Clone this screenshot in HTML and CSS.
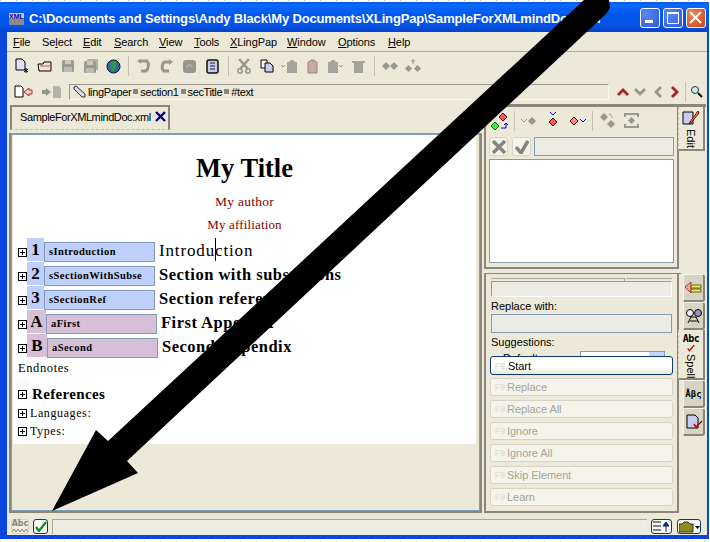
FILE: index.html
```html
<!DOCTYPE html>
<html lang="en">
<head>
<meta charset="utf-8">
<title>XLingPap</title>
<link rel="stylesheet" href="styles.css">
</head>
<body>
<svg class="defs" width="0" height="0">
  <defs>
    <symbol id="dia" viewBox="0 0 8 8"><path d="M4 0 8 4 4 8 0 4Z"/></symbol>
  </defs>
</svg>
<div class="window">
  <header class="titlebar">
    <span class="appicon"><span>XML</span></span>
    <span class="titletext">C:\Documents and Settings\Andy Black\My Documents\XLingPap\SampleForXMLmindDoc.xml</span>
    <span class="winbtns">
      <span class="winbtn"><svg width="20" height="20" viewBox="0 0 20 20"><rect x="5" y="12" width="8" height="3" fill="#fff"/></svg></span>
      <span class="winbtn"><svg width="20" height="20" viewBox="0 0 20 20"><path d="M4.500 4.500h11v11h-11z" fill="none" stroke="#fff" stroke-width="1"/><rect x="4" y="4" width="12" height="2" fill="#fff"/></svg></span>
      <span class="winbtn close"><svg width="20" height="20" viewBox="0 0 20 20"><path d="M4 4 15 15M15 4 4 15" stroke="#fff" stroke-width="2"/></svg></span>
    </span>
  </header>

  <nav class="menubar">
    <span class="m m1"><u>F</u>ile</span>
    <span class="m m2">Se<u>l</u>ect</span>
    <span class="m m3"><u>E</u>dit</span>
    <span class="m m4"><u>S</u>earch</span>
    <span class="m m5"><u>V</u>iew</span>
    <span class="m m6"><u>T</u>ools</span>
    <span class="m m7"><u>X</u>LingPap</span>
    <span class="m m8"><u>W</u>indow</span>
    <span class="m m9"><u>O</u>ptions</span>
    <span class="m"><u>H</u>elp</span>
  </nav>

  <div class="toolbar">
    <div class="tools">
      <span class="tool"><svg width="16" height="16" viewBox="0 0 16 16"><path d="M2 1h6l3 3v8H2z" fill="#dfe0f5" stroke="#000"/><path d="M12 10v5M10 11l4 3M14 11l-4 3" stroke="#000"/></svg></span>
      <span class="tool"><svg width="16" height="16" viewBox="0 0 16 16"><path d="M1 6h5l1-2h7v9H2z" fill="#f3e2cf" stroke="#000"/><path d="M3 8h10" stroke="#b55"/></svg></span>
      <span class="tool"><svg width="14" height="14" viewBox="0 0 14 14"><rect x="1" y="1" width="12" height="12" rx="1.500" fill="#9a9a94"/><rect x="4" y="1" width="6" height="4" fill="#c9c8bd"/><rect x="3" y="8" width="8" height="5" fill="#bdbcb2"/></svg></span>
      <span class="tool"><svg width="16" height="16" viewBox="0 0 16 16"><rect x="4" y="1" width="11" height="11" rx="1" fill="#b0afa6"/><rect x="1" y="3" width="12" height="12" rx="1.500" fill="#9a9a94"/><rect x="4" y="3" width="6" height="4" fill="#c9c8bd"/><rect x="3" y="10" width="8" height="5" fill="#bdbcb2"/></svg></span>
      <span class="tool"><svg width="15" height="15" viewBox="0 0 15 15"><circle cx="7.500" cy="7.500" r="6.500" fill="#2f6f9f" stroke="#111"/><path d="M6 2c3 0 5 2 4 5s-2 5-3 5-1-3-2-4 0-4 1-6z" fill="#2e9a4a"/></svg></span>
    </div>
    <span class="sep"></span>
    <div class="tools">
      <span class="tool"><svg width="15" height="15" viewBox="0 0 15 15"><path d="M3 2l8 0c2 2 2 8-1 10H5" fill="none" stroke="#98978d" stroke-width="3"/><path d="M1 2l4-2v5z" fill="#98978d"/></svg></span>
      <span class="tool"><svg width="15" height="15" viewBox="0 0 15 15"><path d="M12 3H6C3 4 2 10 5 12h5" fill="none" stroke="#98978d" stroke-width="3"/><path d="M14 3l-4-3v6z" fill="#98978d"/></svg></span>
      <span class="tool"><svg width="15" height="15" viewBox="0 0 15 15"><rect x="1" y="1" width="13" height="13" rx="3" fill="#98978d"/><path d="M5 9c-1-4 5-4 5-1" fill="none" stroke="#c9c8bd"/></svg></span>
      <span class="tool"><svg width="15" height="15" viewBox="0 0 15 15"><rect x="2" y="1" width="11" height="13" rx="2" fill="#c7c9e8" stroke="#111" stroke-width="1.500"/><path d="M5 4h5M5 7h5M5 10h5" stroke="#223"/></svg></span>
    </div>
    <span class="sep sep2"></span>
    <div class="tools">
      <span class="tool"><svg width="14" height="15" viewBox="0 0 14 15"><path d="M2 0l9 10M12 0 3 10" stroke="#98978d" stroke-width="2.500"/><circle cx="3" cy="12" r="2.200" fill="none" stroke="#98978d" stroke-width="1.500"/><circle cx="11" cy="12" r="2.200" fill="none" stroke="#98978d" stroke-width="1.500"/></svg></span>
      <span class="tool"><svg width="14" height="14" viewBox="0 0 14 14"><path d="M1 1h6v8H1z" fill="#fff" stroke="#000"/><path d="M5 4h5l3 3v6H5z" fill="#c9cbee" stroke="#000"/></svg></span>
      <span class="tool"><svg width="17" height="14" viewBox="0 0 17 14"><path d="M0 6l2 2 2-2" fill="none" stroke="#98978d"/><path d="M8 3l2-2h2l2 2h2v11H6V3z" fill="#a5a49a"/></svg></span>
      <span class="tool"><svg width="11" height="15" viewBox="0 0 11 15"><path d="M2 3l2-2h3l2 2h1v11H1V3z" fill="#c9a9a0" stroke="#888"/></svg></span>
      <span class="tool"><svg width="17" height="14" viewBox="0 0 17 14"><path d="M3 3l2-2h2l2 2h2v11H1V3z" fill="#a5a49a"/><path d="M12 6l2 2 2-2" fill="none" stroke="#98978d"/></svg></span>
      <span class="tool"><svg width="13" height="14" viewBox="0 0 13 14"><path d="M0 2h13v2H0zM2 4h9v10H2z" fill="#a5a49a"/></svg></span>
    </div>
    <span class="sep sep3"></span>
    <div class="tools">
      <span class="tool grey"><svg width="16" height="12" viewBox="0 0 16 12"><use href="#dia" x="0" y="2" width="8" height="8"/><use href="#dia" x="8" y="2" width="8" height="8"/></svg></span>
      <span class="tool grey"><svg width="16" height="15" viewBox="0 0 16 15"><use href="#dia" x="0" y="6" width="7" height="7"/><use href="#dia" x="9" y="6" width="7" height="7"/><path d="M8 0v5M6 2h4" stroke="#98978d"/></svg></span>
    </div>
  </div>

  <div class="navbar">
    <span class="navicon"><svg width="19" height="14" viewBox="0 0 19 14"><path d="M1 1h6l2 2v9H1z" fill="#fff" stroke="#000"/><path d="M10 7l5-4v2h3v4h-3v2z" fill="#f4c9c0" stroke="#a33"/></svg></span>
    <span class="navicon navicon2"><svg width="21" height="14" viewBox="0 0 21 14"><path d="M1 5h4V3l5 4-5 4V9H1z" fill="#98978d"/><path d="M12 1h6l2 2v10h-8z" fill="#b4b3a9"/></svg></span>
    <div class="path">
      <svg width="13" height="13" viewBox="0 0 13 13"><path d="M1 2l2-1 9 8v3H9L1 4z" fill="#d6d8ee" stroke="#333"/></svg>
      <span class="pathtext">lingPaper</span><i></i><span class="pathtext">section1</span><i></i><span class="pathtext">secTitle</span><i></i><span class="pathtext">#text</span>
    </div>
    <span class="chev"><svg width="12" height="10" viewBox="0 0 12 10"><path d="M0 7 6 1l6 6-2 2-4-4-4 4z" fill="#b02020"/></svg></span>
    <span class="chev"><svg width="12" height="10" viewBox="0 0 12 10"><path d="M0 3l6 6 6-6-2-2-4 4-4-4z" fill="#98978d"/></svg></span>
    <span class="chev"><svg width="10" height="12" viewBox="0 0 10 12"><path d="M7 0 1 6l6 6 2-2-4-4 4-4z" fill="#98978d"/></svg></span>
    <span class="chev"><svg width="10" height="12" viewBox="0 0 10 12"><path d="M3 0l6 6-6 6-2-2 4-4-4-4z" fill="#b02020"/></svg></span>
    <span class="sep navsep"></span>
    <span class="chev"><svg width="13" height="13" viewBox="0 0 13 13"><circle cx="5" cy="5" r="3.500" fill="#cfe6f5" stroke="#333"/><path d="M8 8l4 4" stroke="#000" stroke-width="2"/></svg></span>
  </div>

  <main class="workspace">
    <section class="editor">
      <div class="tabstrip">
        <div class="doctab">
          <span class="tabname">SampleForXMLmindDoc.xml</span>
          <svg class="tabx" width="11" height="11" viewBox="0 0 11 11"><path d="M1 1l9 9M10 1l-9 9" stroke="#00008b" stroke-width="2.400"/></svg>
        </div>
      </div>
      <div class="docframe">
        <article class="doc">
          <h1 class="doctitle">My Title</h1>
          <p class="byline">My author</p>
          <p class="byline aff">My affiliation</p>

          <div class="row"><span class="plus"></span><span class="num">1</span><span class="idbox">sIntroduction</span><span class="head h-reg">Introdu<span class="caret"></span>ction</span></div>
          <div class="row"><span class="plus"></span><span class="num">2</span><span class="idbox">sSectionWithSubse</span><span class="head">Section with subsections</span></div>
          <div class="row"><span class="plus"></span><span class="num">3</span><span class="idbox">sSectionRef</span><span class="head">Section references</span></div>
          <div class="row app"><span class="plus"></span><span class="num">A</span><span class="idbox">aFirst</span><span class="head">First Appendix</span></div>
          <div class="row app b"><span class="plus"></span><span class="num">B</span><span class="idbox">aSecond</span><span class="head">Second Appendix</span></div>

          <p class="endnotes">Endnotes</p>
          <div class="refs"><span class="plus"></span><strong>References</strong></div>
          <div class="lst"><span class="plus"></span><span>Languages:</span></div>
          <div class="lst"><span class="plus"></span><span>Types:</span></div>
        </article>
      </div>
    </section>

    <aside class="side">
      <div class="pane upper">
        <div class="panebody">
          <div class="etools">
            <span class="etool e1"><svg width="20" height="20" viewBox="0 0 20 20"><path d="M13 1l4 4-4 4-4-4z" fill="#f55" stroke="#600"/><path d="M5 10l4 4-4 4-4-4z" fill="#4e4" stroke="#060"/><path d="M11 16h5v-4M14 13l2-2 2 2" fill="none" stroke="#00c"/></svg></span>
            <span class="sep esep esep1"></span>
            <span class="etool"><svg width="16" height="10" viewBox="0 0 16 10"><path d="M0 3l3 3 3-3" fill="none" stroke="#98978d"/><path d="M11 1l4 4-4 4-4-4z" fill="#98978d"/></svg></span>
            <span class="etool"><svg width="10" height="17" viewBox="0 0 10 17"><path d="M2 0l3 3 3-3" fill="none" stroke="#00c"/><path d="M5 6l4 4-4 4-4-4z" fill="#f55" stroke="#600"/></svg></span>
            <span class="etool"><svg width="17" height="10" viewBox="0 0 17 10"><path d="M5 1l4 4-4 4-4-4z" fill="#f88" stroke="#600"/><path d="M11 3l3 3 3-3" fill="none" stroke="#00c"/></svg></span>
            <span class="sep esep"></span>
            <span class="etool"><svg width="15" height="16" viewBox="0 0 15 16"><path d="M4 0l4 4-4 4-4-4zM11 7l4 4-4 4-4-4z" fill="#98978d"/><path d="M9 1c2 0 3 2 3 4" fill="none" stroke="#98978d"/></svg></span>
            <span class="etool"><svg width="15" height="15" viewBox="0 0 15 15"><path d="M1 4V1h13v3M1 11v3h13v-3" fill="none" stroke="#98978d" stroke-width="2"/><path d="M7.500 4l3.500 3.500L7.500 11 4 7.500z" fill="#98978d"/></svg></span>
          </div>
          <div class="cmdrow">
            <span class="cmdbtn"><svg width="14" height="14" viewBox="0 0 14 14"><path d="M1 1l12 12M13 1 1 13" stroke="#85857c" stroke-width="3.500"/></svg></span>
            <span class="cmdbtn"><svg width="14" height="14" viewBox="0 0 14 14"><path d="M1 7l5 6L13 1" fill="none" stroke="#85857c" stroke-width="3.500"/></svg></span>
            <span class="cmdfield"></span>
          </div>
          <div class="whitebox"></div>
        </div>
        <div class="vtabs">
          <div class="vtab on edit">
            <svg width="18" height="16" viewBox="0 0 18 16"><path d="M1 2h10v12H1z" fill="#c9cbee" stroke="#000"/><path d="M16 1 8 12l-1 2 2-1 8-10z" fill="#e2a020" stroke="#800"/></svg>
            <span class="vlabel">Edit</span>
          </div>
        </div>
      </div>
      <div class="splitter"></div>
      <div class="pane lower">
        <div class="panebody lowerbody">
          <div class="hairline"><span></span><span class="hs"></span></div>
          <div class="infield"></div>
          <div class="lbl l1">Replace with:</div>
          <div class="repfield"></div>
          <div class="lbl l2">Suggestions:</div>
          <div class="clipped"><span class="cliptext">Default</span><span class="combo"><span></span></span></div>
          <button class="act start" type="button"><em>F9</em>Start</button>
          <button class="act" type="button"><em>F9</em>Replace</button>
          <button class="act" type="button"><em>F9</em>Replace All</button>
          <button class="act" type="button"><em>F9</em>Ignore</button>
          <button class="act" type="button"><em>F9</em>Ignore All</button>
          <button class="act" type="button"><em>F9</em>Skip Element</button>
          <button class="act" type="button"><em>F9</em>Learn</button>
        </div>
        <div class="vtabs low">
          <div class="vtab off"><svg width="18" height="14" viewBox="0 0 18 14"><path d="M0 6l6-5v11z" fill="#f6a6a0" stroke="#a33"/><path d="M6 4h10v3H6zM6 8h10v3H6z" fill="#ede86a" stroke="#660"/></svg></div>
          <div class="vtab off"><svg width="16" height="16" viewBox="0 0 16 16"><circle cx="4" cy="5" r="3.500" fill="#eee" stroke="#000"/><circle cx="12" cy="5" r="3.500" fill="#99b" stroke="#000"/><path d="M2 15l3-6h5l3 6M4 13h8" fill="none" stroke="#000"/></svg></div>
          <div class="vtab on spell">
            <span class="abc">Abc</span>
            <svg width="10" height="8" viewBox="0 0 10 8"><path d="M1 4l2 3 6-7" fill="none" stroke="#c00000" stroke-width="1.500"/></svg>
            <span class="vlabel">Spell</span>
          </div>
          <div class="vtab off"><span class="abc greek">Âβς</span></div>
          <div class="vtab off"><svg width="18" height="15" viewBox="0 0 18 15"><path d="M2 1h8l3 3v10H2z" fill="#c9cbee" stroke="#000"/><path d="M9 10l2 3 6-6" fill="none" stroke="#c00000" stroke-width="1.500"/></svg></div>
        </div>
      </div>
    </aside>
  </main>

  <footer class="statusbar">
    <span class="sbtn flat"><span class="sabc">Abc</span><svg width="16" height="5" viewBox="0 0 16 5"><path d="M0 4l2-3 2 3 2-3 2 3 2-3 2 3 2-3 2 3" fill="none" stroke="#86857c"/></svg></span>
    <span class="sbtn check"><svg width="12" height="11" viewBox="0 0 12 11"><path d="M1 6l3 4 7-9" fill="none" stroke="#0a8a1a" stroke-width="2.200"/></svg></span>
    <span class="sfield"></span>
    <span class="sbtn r1"><svg width="17" height="11" viewBox="0 0 17 11"><path d="M0 1h8M0 5h8M0 9h8" stroke="#111"/><path d="M13 11V2M10 5l3-4 3 4z" stroke="#003070" fill="#003070"/></svg></span>
    <span class="sbtn r2"><svg width="21" height="12" viewBox="0 0 21 12"><path d="M0 3h3l2-2h4l2 2h3v8H0z" fill="#8f8a20" stroke="#332"/><path d="M16 5h5l-2.500 3z" fill="#000"/></svg></span>
  </footer>
</div>

<svg class="bigarrow" width="710" height="542" viewBox="0 0 710 542" aria-hidden="true">
  <path d="M52 511 96 430 108 441 584 0H609L610 8 606 14 127 461 138 473Z"/>
</svg>
</body>
</html>
```

FILE: styles.css
```css
* { box-sizing: border-box; }
html, body { margin: 0; padding: 0; }
body {
  position: relative;
  width: 710px;
  height: 542px;
  overflow: hidden;
  background:
    repeating-linear-gradient(90deg, #c8c8c8 0 1px, transparent 1px 16px) 0 0 / 100% 1px no-repeat,
    repeating-linear-gradient(90deg, #c8c8c8 0 1px, transparent 1px 16px) 0 100% / 100% 1px no-repeat,
    #fff;
  font-family: "Liberation Sans", Arial, sans-serif;
  font-size: 11px;
  color: #000;
}
.defs { position: absolute; }
#dia, .grey { fill: #98978d; }

.window {
  margin-top: 2px;
  width: 709px;
  height: 537px;
  display: flex;
  flex-direction: column;
  background: #ece9d8;
  border-left: 7px solid #0a45dd;
  border-right: 2px solid #0a45dd;
  border-bottom: 4px solid #0a45dd;
}

.titlebar {
  height: 30px;
  margin-left: -7px;
  margin-right: -2px;
  padding: 0 3px 0 9px;
  flex: none;
  display: flex;
  align-items: center;
  background: linear-gradient(#0a5ae8 0, #0a6afa 3px, #0058ee 12px, #0553e6 24px, #0342c8 30px);
  color: #fff;
}
.appicon {
  width: 15px;
  height: 12px;
  flex: none;
  margin: 3px 5px 0 0;
  background: linear-gradient(#c8cbe8 50%, #8a8a8a 50%);
  font: bold 7px/7px "Liberation Sans", sans-serif;
  color: #00008b;
  text-align: center;
  overflow: hidden;
}
.titletext {
  flex: 1;
  min-width: 0;
  margin-top: 3px;
  white-space: nowrap;
  font: bold 13px/18px "Liberation Sans", sans-serif;
  letter-spacing: -.15px;
}
.winbtns { display: flex; gap: 3px; flex: none; margin-top: 2px; }
.winbtn {
  width: 20px;
  height: 20px;
  border: 1px solid #fff;
  border-radius: 3px;
  background: radial-gradient(circle at 30% 30%, #5c8af0, #2a56d8);
  overflow: hidden;
}
.winbtn svg { display: block; margin: -1px; }
.winbtn.close { background: radial-gradient(circle at 30% 30%, #e88a66, #d04010); }

.menubar {
  height: 20px;
  flex: none;
  display: flex;
  align-items: center;
  padding-left: 6px;
  border-bottom: 1px solid #aca899;
  letter-spacing: -.1px;
}
.m { flex: none; }
.m1 { width: 29px; }
.m2 { width: 41px; }
.m3 { width: 31px; }
.m4 { width: 45px; }
.m5 { width: 35px; }
.m6 { width: 36px; }
.m7 { width: 57px; }
.m8 { width: 51px; }
.m9 { width: 50px; }

.toolbar {
  height: 28px;
  flex: none;
  display: flex;
  align-items: center;
  padding-left: 3px;
}
.tools { display: flex; }
.tool {
  width: 23px;
  height: 20px;
  display: flex;
  align-items: center;
  justify-content: center;
}
.sep {
  width: 1px;
  height: 20px;
  flex: none;
  background: #c4c1b0;
  margin: 0 3px;
}
.sep2, .sep3 { margin-left: 4px; }

.navbar {
  height: 23px;
  flex: none;
  display: flex;
  align-items: center;
  padding-left: 7px;
}
.navicon { width: 19px; height: 14px; display: flex; }
.navicon2 { margin-left: 8px; width: 21px; margin-right: 7px; }
.path {
  width: 540px;
  height: 16px;
  flex: none;
  display: flex;
  align-items: center;
  gap: 1px;
  padding-left: 3px;
  border-top: 1px solid #9a988a;
  border-left: 1px solid #9a988a;
  border-right: 1px solid #f8f7f0;
  border-bottom: 1px solid #f8f7f0;
  font-size: 11px;
  letter-spacing: -.35px;
  margin-right: 5px;
}
.path svg { margin-right: 1px; }
.path i { width: 5px; height: 5px; background: #85857c; margin: 0 1px; }
.chev { width: 17.500px; display: flex; justify-content: center; align-items: center; }
.navsep { margin: 0 2px 0 1px; }

.workspace {
  flex: 1;
  min-height: 0;
  display: flex;
  padding: 1px 0 0 2px;
}

.editor {
  width: 473px;
  flex: none;
  display: flex;
  flex-direction: column;
  padding-bottom: 3px;
}
.tabstrip { height: 29px; flex: none; padding-top: 1px; }
.doctab {
  width: 160px;
  height: 25px;
  margin-left: 1px;
  display: flex;
  align-items: center;
  padding: 0 0 3px 8px;
  border-top: 2px solid #8a877a;
  border-left: 2px solid #8a877a;
  border-right: 2px solid #8a877a;
  border-bottom: 1px dashed #c4c1b0;
}
.tabname { flex: none; width: 135px; font-size: 11px; letter-spacing: -.4px; white-space: nowrap; }
.tabx { flex: none; }
.docframe {
  flex: 1;
  min-height: 0;
  border: 2px solid #8a877a;
  border-top: 1px solid #7f9db9;
  box-shadow: inset 0 0 0 1px #7f9db9;
  padding: 1px 1px 1px 2px;
  background: #ece9d8;
}
.doc {
  height: 309px;
  margin-right: 3px;
  padding: 16px 5px 0;
  background: #fff;
  font-family: "Liberation Serif", "Times New Roman", serif;
}
.doctitle {
  margin: 0;
  font-size: 26.500px;
  line-height: 34px;
  text-align: center;
}
.byline {
  margin: 9px 0 0;
  font-size: 13.500px;
  line-height: 15px;
  text-align: center;
  color: #800000;
  letter-spacing: .25px;
}
.aff { margin-top: 8px; margin-bottom: 6px; font-size: 13px; letter-spacing: .15px; }

.row {
  height: 24px;
  display: flex;
  align-items: flex-start;
}
.plus {
  width: 9px;
  height: 9px;
  flex: none;
  border: 1px solid #000;
  background:
    linear-gradient(#000, #000) center / 5px 1px no-repeat,
    linear-gradient(#000, #000) center / 1px 5px no-repeat;
}
.row .plus { margin-top: 10px; }
.num {
  width: 17px;
  height: 23px;
  flex: none;
  background: #bfcffc;
  font-size: 17px;
  line-height: 23px;
  font-weight: 700;
  text-align: center;
}
.idbox {
  width: 111px;
  height: 20px;
  flex: none;
  margin-top: 4px;
  padding-left: 4px;
  border: 1px solid #7f9db9;
  background: #bfcffc;
  font-size: 10.500px;
  font-weight: 700;
  line-height: 18px;
  letter-spacing: .45px;
  white-space: nowrap;
  overflow: hidden;
}
.head {
  margin-left: 4px;
  font-size: 16.500px;
  line-height: 25px;
  font-weight: 700;
  letter-spacing: .5px;
  white-space: nowrap;
}
.h-reg { font-size: 17px; font-weight: 400; letter-spacing: .85px; }
.caret {
  display: inline-block;
  width: 1px;
  height: 23px;
  margin: 0 -1px 0 0;
  background: #000;
  vertical-align: top;
}
.app .num { width: 19px; background: #d8bfd8; }
.app .idbox { background: #d8bfd8; }
.app.b .num { width: 20px; }
.endnotes {
  margin: 1px 0 0;
  font-size: 12.500px;
  line-height: 18px;
  letter-spacing: .6px;
}
.refs {
  display: flex;
  align-items: center;
  margin-top: 8px;
  height: 19px;
  font-size: 15px;
  letter-spacing: .35px;
}
.refs strong { margin-left: 5px; }
.lst {
  display: flex;
  align-items: center;
  height: 18px;
  font-size: 12px;
  letter-spacing: .6px;
}
.lst span:last-child { margin-left: 3px; }

.side { width: 222px; flex: none; display: flex; flex-direction: column; margin-left: 2px; }
.pane { display: flex; }
.upper { height: 165px; flex: none; border-top: 3px solid #8a877a; }
.panebody {
  width: 195px;
  flex: none;
  border-left: 2px solid #8a877a;
  border-right: 2px solid #8a877a;
  border-bottom: 2px solid #8a877a;
}
.etools {
  height: 27px;
  display: flex;
  align-items: center;
}
.etool { width: 24px; display: flex; justify-content: center; }
.e1 { width: 28px; margin-top: 3px; }
.esep { margin: 0 2px 0 3px; }
.esep1 { margin-left: 0; }
.cmdrow {
  display: flex;
  gap: 4px;
  padding: 3px 3px 0 3px;
}
.cmdbtn {
  width: 19px;
  height: 19px;
  display: flex;
  align-items: center;
  justify-content: center;
  background: #f5f4ea;
  border: 1px solid #d6d3c2;
  border-radius: 3px;
}
.cmdfield {
  flex: 1;
  height: 19px;
  margin-left: -1px;
  background: #ecebe4;
  border: 1px solid #7f9db9;
}
.whitebox {
  height: 104px;
  margin: 3px 3px 0;
  background: #fff;
  border: 1px solid #7f9db9;
}
.vtabs { flex: 1; }
.vtab { display: flex; flex-direction: column; align-items: center; }
.vtab.on {
  width: 27px;
  background: #ece9d8;
  border-right: 2px solid #8a877a;
  border-bottom: 2px solid #8a877a;
  margin-left: -1px;
  padding-top: 3px;
}
.vlabel {
  writing-mode: vertical-rl;
  font-size: 11px;
  margin-top: 3px;
}
.edit { height: 44px; border-left: 1px dashed #c4c1b0; }
.splitter {
  height: 5px;
  flex: none;
  border-bottom: 1px solid #8a877a;
  width: 197px;
}
.lower { flex: 1; min-height: 0; }
.lowerbody {
  padding: 4px 5px 0;
  margin-bottom: 3px;
  overflow: hidden;
}
.hairline { display: flex; height: 3px; gap: 1px; }
.hairline span { flex: 1; border-top: 1px solid #aca899; border-right: 1px solid #aca899; }
.hairline .hs { flex: none; width: 46px; border-right: 0; }
.infield {
  height: 16px;
  background: #ecebe4;
  border-top: 1px solid #9a988a;
  border-left: 1px solid #9a988a;
  border-right: 1px solid #fff;
  border-bottom: 1px solid #fff;
}
.lbl { line-height: 15px; }
.l1 { margin-top: 2px; }
.repfield {
  height: 19px;
  background: #ecebe4;
  border: 1px solid #7f9db9;
}
.l2 { margin-top: 2px; margin-bottom: 1px; }
.clipped {
  height: 5px;
  display: flex;
  justify-content: space-between;
  overflow: hidden;
}
.cliptext { display: block; height: 5px; overflow: hidden; padding-left: 12px; line-height: 15px; }
.combo {
  width: 85px;
  height: 10px;
  margin-right: 7px;
  border: 1px solid #7f9db9;
  background: #fff;
  display: flex;
  justify-content: flex-end;
}
.combo span { width: 15px; background: #c7d5f5; }
.act {
  display: flex;
  align-items: center;
  width: 183px;
  height: 18px;
  margin: 4px 0 0 -1px;
  padding: 0 0 0 2px;
  background: #f5f4ea;
  border: 1px solid #d6d3c2;
  border-radius: 3px;
  color: #a5a496;
  font: 11px/16px "Liberation Sans", sans-serif;
  letter-spacing: -.05px;
}
.act em {
  width: 14px;
  font-style: normal;
  font-weight: 700;
  font-size: 9px;
  color: #e3e1d2;
}
.start {
  height: 19px;
  margin-top: 0;
  margin-bottom: -1px;
  background: linear-gradient(#fff, #fff 60%, #ece9d8);
  border-color: #0a3a78;
  color: #000;
}
.start em { margin-right: 1px; }

.off {
  width: 22px;
  height: 28px;
  margin-left: 4px;
  background: #d8d4c4;
  border: 1px solid #8a877a;
  border-left-color: #f5f4ea;
  border-top-color: #f5f4ea;
  border-right-width: 2px;
  border-bottom-width: 2px;
  justify-content: center;
  border-radius: 0 3px 3px 0;
}
.spell {
  height: 50px;
  background: #ece9d8;
  border-left: 1px dashed #c4c1b0;
}
.abc { font: bold 10px/11px "DejaVu Sans Mono", monospace; letter-spacing: -.5px; }
.spell svg { margin-top: 1px; }
.spell .vlabel { margin-top: 2px; }
.greek { font-size: 9px; line-height: 14px; letter-spacing: 0; }

.statusbar {
  height: 19px;
  flex: none;
  display: flex;
  align-items: center;
  padding-left: 4px;
  border-top: 2px solid #ece9d8;
}
.sbtn {
  height: 15px;
  flex: none;
  display: flex;
  flex-direction: column;
  align-items: center;
  justify-content: center;
  border: 1px solid #0a3a78;
  border-radius: 3px;
  background: #fafaf4;
}
.flat {
  width: 18px;
  border-color: #d6d3c2;
  background: #f0eee2;
}
.sabc { font: bold 8px/8px "DejaVu Sans", sans-serif; color: #86857c; }
.check { width: 15px; margin-left: 4px; }
.sfield {
  width: 595px;
  height: 15px;
  margin-left: 4px;
  background: #ecebe4;
  border-top: 1px solid #aca899;
  border-left: 1px solid #aca899;
  flex: none;
}
.r1 { width: 21px; margin-left: 4px; }
.r2 { width: 24px; margin-left: 5px; }

.bigarrow {
  position: absolute;
  left: 0;
  top: 0;
  fill: #000;
  pointer-events: none;
}
```
